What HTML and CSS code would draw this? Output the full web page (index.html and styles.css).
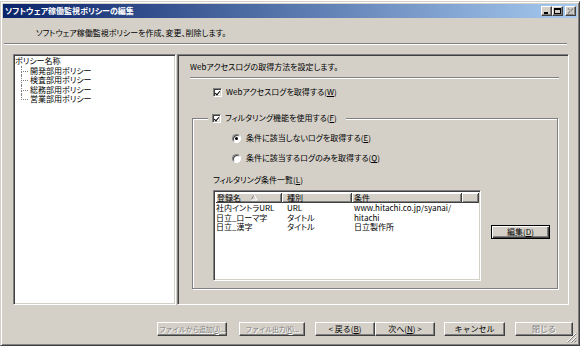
FILE: index.html
```html
<!DOCTYPE html>
<html lang="ja">
    <head>
        <meta charset="UTF-8"/>
        <meta name="viewport" content="width=device-width, initial-scale=1.0"/>
        <title>ソフトウェア稼働監視ポリシーの編集</title>
        <link rel="stylesheet" href="styles.css">
    </head>
    <body>
        <div class="window">
            <div class="titlebar">
                <span class="title">ソフトウェア稼働監視ポリシーの編集</span>
                <div class="caption-buttons">
                    <span class="cap-btn">
                        <svg width="9" height="8" viewBox="0 0 9 8"><rect x="2" y="5" width="4" height="2" fill="#000"/></svg>
                    </span>
                    <span class="cap-btn">
                        <svg width="9" height="8" viewBox="0 0 9 8"><rect x="1.5" y="1.5" width="6" height="5" fill="none" stroke="#000"/><rect x="1" y="1" width="7" height="2" fill="#000"/></svg>
                    </span>
                    <span class="cap-btn cap-close">
                        <svg width="9" height="8" viewBox="0 0 9 8"><path d="M2 1.5 L7 6.5 M7 1.5 L2 6.5" stroke="#808080" stroke-width="1.2"/><path d="M3 2.5 L8 7.5" stroke="#fff" stroke-width="0.8"/></svg>
                    </span>
                </div>
            </div>

            <p class="intro">ソフトウェア稼働監視ポリシーを作成、変更、削除します。</p>
            <div class="rule"></div>

            <div class="main">
                <div class="tree">
                    <div class="tree-root">ポリシー名称</div>
                    <ul class="tree-children">
                        <li>開発部用ポリシー</li>
                        <li>検査部用ポリシー</li>
                        <li>総務部用ポリシー</li>
                        <li>営業部用ポリシー</li>
                    </ul>
                </div>

                <div class="panel">
                    <div class="panel-intro">Webアクセスログの取得方法を設定します。</div>
                    <div class="panel-rule"></div>

                    <label class="check-row">
                        <span class="checkbox checked"></span>
                        <span>Webアクセスログを取得する(<u>W</u>)</span>
                    </label>

                    <fieldset class="group">
                        <legend class="check-row legend">
                            <span class="checkbox checked"></span>
                            <span>フィルタリング機能を使用する(<u>F</u>)</span>
                        </legend>

                        <label class="radio-row">
                            <span class="radio selected"></span>
                            <span>条件に該当しないログを取得する(<u>E</u>)</span>
                        </label>
                        <label class="radio-row">
                            <span class="radio"></span>
                            <span>条件に該当するログのみを取得する(<u>Q</u>)</span>
                        </label>

                        <div class="list-label">フィルタリング条件一覧(<u>L</u>)</div>

                        <div class="list-row">
                            <div class="listview">
                                <div class="lv-head">
                                    <span class="lv-col first">
                                        <span>登録名</span>
                                        <svg class="sort" width="8" height="7" viewBox="0 0 8 7"><path d="M1 6 L4 1" stroke="#808080" fill="none"/><path d="M4 1 L7 6 L1 6" stroke="#fff" fill="none"/></svg>
                                    </span>
                                    <span class="lv-col">種別</span>
                                    <span class="lv-col third">条件</span>
                                    <span class="lv-col"></span>
                                </div>
                                <div class="lv-body">
                                    <span class="first">社内イントラURL</span><span>URL</span><span class="third">www.hitachi.co.jp/syanai/</span><span></span>
                                    <span class="first">日立_ローマ字</span><span>タイトル</span><span class="third">hitachi</span><span></span>
                                    <span class="first">日立_漢字</span><span>タイトル</span><span class="third">日立製作所</span><span></span>
                                </div>
                            </div>
                            <button class="btn btn-default edit-btn">編集(<u>D</u>)</button>
                        </div>
                    </fieldset>
                </div>
            </div>

            <div class="buttons">
                <button class="btn disabled tight" style="width: 70px">ファイルから追加(<u>J</u>)...</button>
                <button class="btn disabled tight gap-12" style="width: 66px">ファイル出力(<u>K</u>)...</button>
                <button class="btn gap-10" style="width: 60px">&lt; 戻る(<u>B</u>)</button>
                <button class="btn" style="width: 60px">次へ(<u>N</u>) &gt;</button>
                <button class="btn gap-9" style="width: 61px">キャンセル</button>
                <button class="btn disabled gap-10" style="width: 58px">閉じる</button>
            </div>

            <svg class="grip" width="11" height="11" viewBox="0 0 11 11">
                <path d="M10 1 L1 10 M10 5 L5 10 M10 9 L9 10" stroke="#fff"/>
                <path d="M10.5 1.5 L1.5 10.5 M10.5 5.5 L5.5 10.5 M10.5 8.5 L8.5 10.5" stroke="#808080"/>
            </svg>
        </div>
    </body>
</html>
```

FILE: styles.css
```css
body {
    margin: 0;
    background: #fff;
    font-family: "Noto Sans CJK JP", "Noto Sans", sans-serif;
    font-size: 8px;
    font-feature-settings: "palt";
    color: #000;
}

.window {
    position: relative;
    box-sizing: border-box;
    width: 580px;
    height: 345px;
    margin-top: 1px;
    padding: 2px;
    display: flex;
    flex-direction: column;
    background: #d4d0c8;
    border: 1px solid;
    border-color: #d4d0c8 #404040 #404040 #d4d0c8;
    box-shadow: inset 1px 1px #fff, inset -1px -1px #808080;
}

/* title bar */

.titlebar {
    display: flex;
    align-items: center;
    height: 14px;
    padding: 0 1px 0 2px;
    background: linear-gradient(to right, #0a246a, #a6caf0);
    color: #fff;
    font-weight: 700;
    line-height: 14px;
}

.caption-buttons {
    display: flex;
    margin-left: auto;
}

.cap-btn {
    display: flex;
    align-items: center;
    justify-content: center;
    box-sizing: border-box;
    width: 11px;
    height: 10px;
    background: #d4d0c8;
    border: 1px solid;
    border-color: #fff #404040 #404040 #fff;
    box-shadow: inset -1px -1px #808080;
}

.cap-close {
    margin-left: 2px;
}

/* header text */

.intro {
    margin: 10px 0 0 33px;
    line-height: 10px;
}

.rule {
    width: 563px;
    margin: 5px 0 0 1px;
    border-top: 1px solid #808080;
    border-bottom: 1px solid #fff;
}

/* main area */

.main {
    display: flex;
    gap: 1px;
    height: 251px;
    margin: 9px 0 0 10px;
}

.tree,
.panel,
.listview {
    box-sizing: border-box;
    border: 1px solid;
    border-color: #808080 #fff #fff #808080;
    box-shadow: inset 1px 1px #404040, inset -1px -1px #d4d0c8;
}

.tree {
    width: 163px;
    padding: 1px;
    background: #fff;
    line-height: 9.5px;
}

.tree-children {
    margin: 0;
    padding: 0;
    list-style: none;
}

.tree-children li {
    position: relative;
    padding-left: 15px;
}

.tree-children li::before {
    content: "";
    position: absolute;
    left: 6px;
    top: 0;
    width: 6px;
    height: 5px;
    border-left: 1px dotted #808080;
    border-bottom: 1px dotted #808080;
}

.tree-children li:not(:last-child)::after {
    content: "";
    position: absolute;
    left: 6px;
    top: 5px;
    bottom: 0;
    border-left: 1px dotted #808080;
}

.panel {
    width: 392px;
    padding: 7px 9px 0 12px;
}

.panel-intro {
    line-height: 10px;
}

.panel-rule {
    width: 369px;
    margin-top: 5px;
    border-top: 1px solid #808080;
    border-bottom: 1px solid #fff;
}

/* checkboxes and radios */

.check-row,
.radio-row {
    display: flex;
    align-items: center;
    gap: 4px;
    line-height: 10px;
}

.panel > .check-row {
    margin: 8px 0 0 23px;
}

.checkbox {
    position: relative;
    box-sizing: border-box;
    width: 9px;
    height: 9px;
    background: #fff;
    border: 1px solid;
    border-color: #808080 #fff #fff #808080;
    box-shadow: inset 1px 1px #404040, inset -1px -1px #d4d0c8;
}

.checkbox.checked::after {
    content: "";
    position: absolute;
    left: 2px;
    top: 1px;
    width: 2px;
    height: 4px;
    border: solid #000;
    border-width: 0 1.5px 1.5px 0;
    transform: rotate(40deg);
}

.radio {
    position: relative;
    box-sizing: border-box;
    width: 9px;
    height: 9px;
    background: #fff;
    border-radius: 50%;
    border: 1px solid;
    border-color: #808080 #fff #fff #808080;
    box-shadow: inset 1px 1px #404040;
}

.radio.selected::after {
    content: "";
    position: absolute;
    left: 2px;
    top: 2px;
    width: 3px;
    height: 3px;
    border-radius: 50%;
    background: #000;
}

/* group box */

.group {
    box-sizing: border-box;
    width: 366px;
    min-width: 0;
    margin: 16px 0 0 2px;
    padding: 0 0 7px 20px;
    border: 1px solid #808080;
    box-shadow: inset 1px 1px #fff, 1px 1px #fff;
}

.legend {
    margin-left: -5px;
    padding: 0 9px 0 4px;
    background: #d4d0c8;
}

.radio-row {
    gap: 5px;
    margin: 10px 0 0 19px;
}

.list-label {
    margin-top: 12px;
    line-height: 10px;
}

.list-row {
    display: flex;
    align-items: flex-start;
    margin-top: 5px;
}

/* list view */

.listview {
    width: 268px;
    height: 91px;
    padding: 2px 1px 0 2px;
    background: #fff;
}

.lv-head,
.lv-body {
    display: grid;
    grid-template-columns: 66px 70px 110px 1fr;
}

.lv-col {
    box-sizing: border-box;
    height: 10px;
    padding-left: 5px;
    background: #d4d0c8;
    border-right: 1px solid #404040;
    border-bottom: 1px solid #404040;
    box-shadow: inset 1px 1px #fff, inset -1px -1px #808080;
    line-height: 9px;
}

.lv-col.first {
    display: flex;
    align-items: center;
    padding-left: 1px;
}

.lv-col.third,
.lv-body .third {
    padding-left: 2px;
}

.sort {
    flex: none;
    margin-left: 9px;
}

.lv-body {
    line-height: 9.5px;
    white-space: nowrap;
}

.lv-body span {
    padding-left: 5px;
}

.lv-body span.first {
    padding-left: 0;
}

/* buttons */

.btn {
    box-sizing: border-box;
    height: 14px;
    padding: 0;
    background: #d4d0c8;
    border: 1px solid;
    border-color: #fff #404040 #404040 #fff;
    box-shadow: inset -1px -1px #808080;
    font-family: inherit;
    font-size: 8px;
    line-height: 12px;
    color: #000;
    white-space: nowrap;
}

.btn.disabled {
    color: #808080;
    text-shadow: 1px 1px #fff;
}

.btn.tight {
    font-size: 7px;
    letter-spacing: -0.3px;
}

.btn-default {
    border-color: #000;
    box-shadow: inset 1px 1px #fff, inset -1px -1px #404040, inset -2px -2px #808080;
}

.edit-btn {
    width: 59px;
    margin: 35px 0 0 10px;
}

.buttons {
    display: flex;
    justify-content: flex-end;
    margin-top: 17px;
    padding-right: 4px;
}

.gap-12 {
    margin-left: 12px;
}

.gap-10 {
    margin-left: 10px;
}

.gap-9 {
    margin-left: 9px;
}

.grip {
    position: absolute;
    right: 2px;
    bottom: 2px;
}
```
